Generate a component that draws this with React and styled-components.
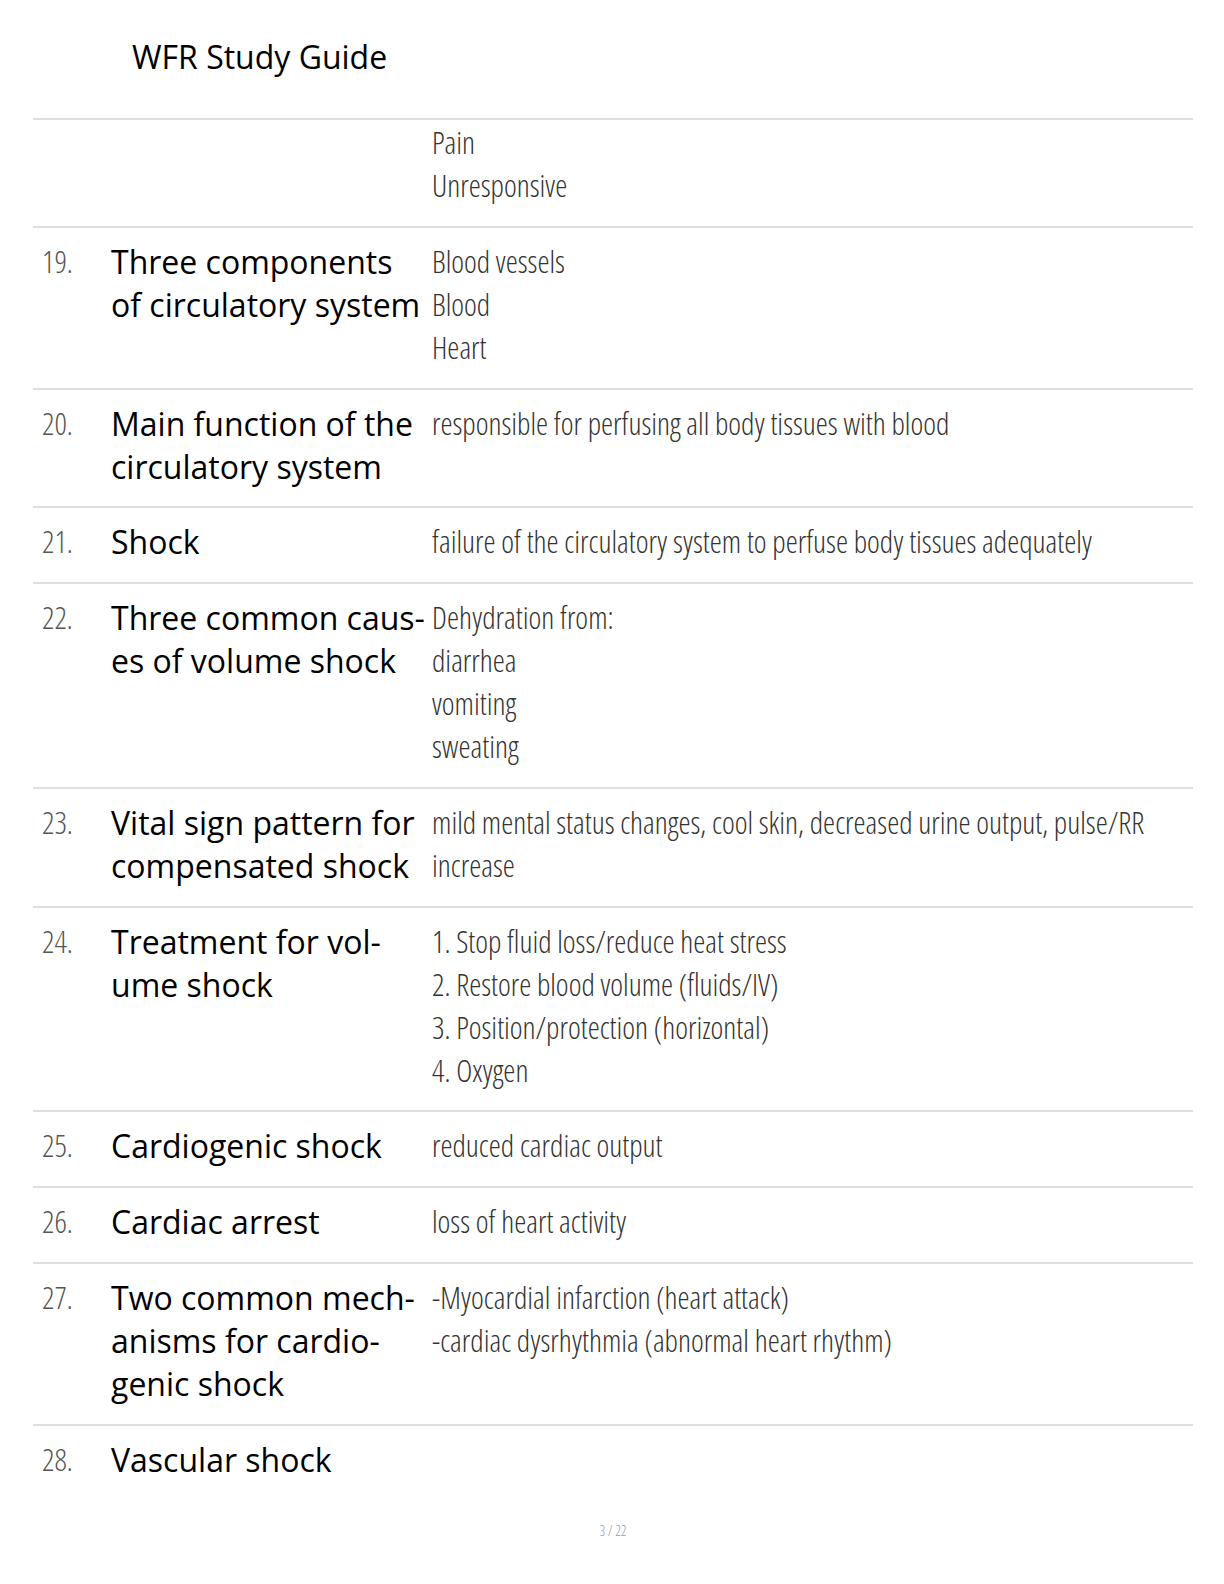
import React from "react";
import styled, { createGlobalStyle } from "styled-components";

const Global = createGlobalStyle`
  html, body { margin: 0; padding: 0; background: #ffffff; }
  body { font-family: "Open Sans", "Noto Sans", sans-serif; color: #000; }
`;

const Page = styled.div`
  width: 1224px;
  height: 1584px;
  box-sizing: border-box;
  padding: 0 31px 0 33px;
  display: flex;
  flex-direction: column;
`;

const Header = styled.header`
  height: 118px;
  box-sizing: border-box;
  padding: 36px 0 0 99px;
  font-size: 32px;
  line-height: 42px;
  color: #000;
`;

const Table = styled.div`
  display: flex;
  flex-direction: column;
`;

const Row = styled.div`
  display: grid;
  grid-template-columns: 62px 314px 1fr;
  column-gap: 7px;
  padding: ${(p) => (p.$cont ? "1px" : "12px")} 0 18.75px 9px;
  border-top: 2px solid #dddde2;
  line-height: 43px;
`;

const Num = styled.div`
  font-family: "Open Sans", sans-serif;
  font-stretch: 75%;
  font-weight: 300;
  font-size: 30.5px;
  color: #555;
`;

const Term = styled.div`
  font-family: "Open Sans", sans-serif;
  font-size: 32px;
  color: #000;
  hyphens: manual;
`;

const Def = styled.div`
  font-family: "Open Sans", sans-serif;
  font-stretch: 75%;
  font-weight: 300;
  font-size: 30.5px;
  color: #333;
  padding-right: 20px;
`;

const Footer = styled.div`
  margin-top: auto;
  margin-bottom: 44px;
  text-align: center;
  font-family: "Open Sans", sans-serif;
  font-stretch: 75%;
  font-weight: 300;
  font-size: 14px;
  color: #999;
`;

const rows = [
  { cont: true, n: "", t: "", d: ["Pain", "Unresponsive"] },
  { n: "19.", t: "Three components of circulatory system", d: ["Blood vessels", "Blood", "Heart"] },
  { n: "20.", t: "Main function of the circulatory system", d: ["responsible for perfusing all body tissues with blood"] },
  { n: "21.", t: "Shock", d: ["failure of the circulatory system to perfuse body tissues adequately"] },
  { n: "22.", t: "Three common caus\u00ADes of volume shock", d: ["Dehydration from:", "diarrhea", "vomiting", "sweating"] },
  { n: "23.", t: "Vital sign pattern for compensated shock", d: ["mild mental status changes, cool skin, decreased urine output, pulse/RR increase"] },
  { n: "24.", t: "Treatment for vol\u00ADume shock", d: ["1. Stop fluid loss/reduce heat stress", "2. Restore blood volume (fluids/IV)", "3. Position/protection (horizontal)", "4. Oxygen"] },
  { n: "25.", t: "Cardiogenic shock", d: ["reduced cardiac output"] },
  { n: "26.", t: "Cardiac arrest", d: ["loss of heart activity"] },
  { n: "27.", t: "Two common mech\u00ADanisms for cardio\u00ADgenic shock", d: ["-Myocardial infarction (heart attack)", "-cardiac dysrhythmia (abnormal heart rhythm)"] },
  { n: "28.", t: "Vascular shock", d: [] },
];

export default function App() {
  return (
    <Page>
      <Global />
      <Header>WFR Study Guide</Header>
      <Table>
        {rows.map((r, i) => (
          <Row key={i} $cont={r.cont}>
            <Num>{r.n}</Num>
            <Term>{r.t}</Term>
            <Def>
              {r.d.map((line, j) => (
                <div key={j}>{line}</div>
              ))}
            </Def>
          </Row>
        ))}
      </Table>
      <Footer>3 / 22</Footer>
    </Page>
  );
}
